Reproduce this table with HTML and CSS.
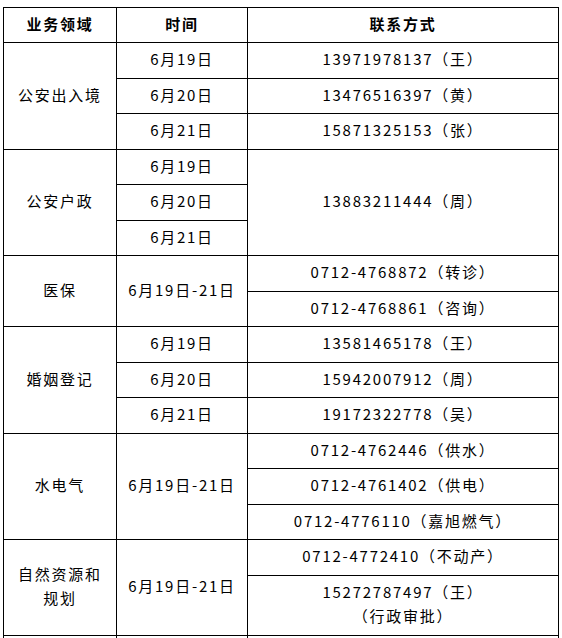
FILE: index.html
```html
<!DOCTYPE html>
<html lang="zh">
<head>
<meta charset="utf-8">
<link rel="stylesheet" href="styles.css">
</head>
<body>
<table class="grid">
  <colgroup>
    <col class="c1"><col class="c2"><col class="c3">
  </colgroup>
  <thead>
    <tr><th>业务领域</th><th>时间</th><th>联系方式</th></tr>
  </thead>
  <tbody>
    <tr><td rowspan="3">公安出入境</td><td>6月19日</td><td>13971978137（王）</td></tr>
    <tr><td>6月20日</td><td>13476516397（黄）</td></tr>
    <tr><td>6月21日</td><td>15871325153（张）</td></tr>

    <tr><td rowspan="3">公安户政</td><td>6月19日</td><td rowspan="3">13883211444（周）</td></tr>
    <tr><td>6月20日</td></tr>
    <tr><td>6月21日</td></tr>

    <tr><td rowspan="2">医保</td><td rowspan="2">6月19日-21日</td><td>0712-4768872（转诊）</td></tr>
    <tr><td>0712-4768861（咨询）</td></tr>

    <tr><td rowspan="3">婚姻登记</td><td>6月19日</td><td>13581465178（王）</td></tr>
    <tr><td>6月20日</td><td>15942007912（周）</td></tr>
    <tr><td>6月21日</td><td>19172322778（吴）</td></tr>

    <tr><td rowspan="3">水电气</td><td rowspan="3">6月19日-21日</td><td>0712-4762446（供水）</td></tr>
    <tr><td>0712-4761402（供电）</td></tr>
    <tr><td>0712-4776110（嘉旭燃气）</td></tr>

    <tr><td rowspan="2" class="wrap">自然资源和规划</td><td rowspan="2">6月19日-21日</td><td>0712-4772410（不动产）</td></tr>
    <tr class="tall"><td>15272787497（王）<br>（行政审批）</td></tr>

    <tr><td></td><td></td><td></td></tr>
  </tbody>
</table>
</body>
</html>
```
FILE: styles.css
```css
html, body {
  margin: 0;
  padding: 0;
  background: #fff;
}
body {
  padding: 7px 0 0 3px;
  font-family: "Noto Sans CJK SC", "Noto Sans", sans-serif;
  font-size: 15px;
  color: #000;
}
.grid {
  border-collapse: collapse;
  table-layout: fixed;
  width: 555px;
}
.c1 { width: 113px; }
.c2 { width: 131px; }
.c3 { width: 311px; }
.grid th,
.grid td {
  border: 1px solid #000;
  padding: 0 4px 2px;
  height: 35.5px;
  box-sizing: border-box;
  text-align: center;
  vertical-align: middle;
  letter-spacing: 1.75px;
  line-height: 24px;
  font-weight: normal;
}
.grid th {
  font-weight: bold;
  height: 35px;
}
.grid .tall td {
  height: 60px;
}
.grid .wrap {
  padding: 0 8px 2px;
}
```
